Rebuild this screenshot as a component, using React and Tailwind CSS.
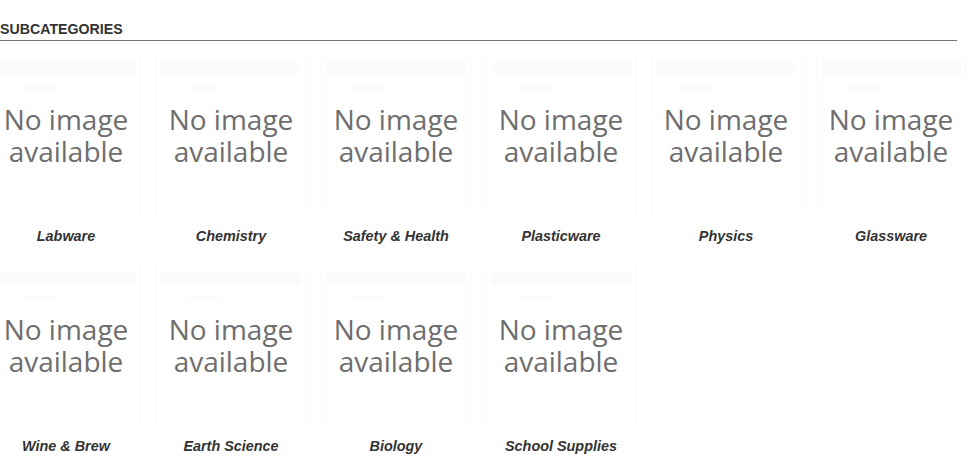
import React from 'react';

const subcategories = [
  'Labware',
  'Chemistry',
  'Safety & Health',
  'Plasticware',
  'Physics',
  'Glassware',
  'Wine & Brew',
  'Earth Science',
  'Biology',
  'School Supplies',
];

// faded "no image" placeholder picture
const Placeholder = () => (
  <div className="w-[150px] h-[160px] shrink-0 flex flex-col border-x border-[#fafafa]">
    <div className="mx-[4px] mt-[6px] h-[14px] bg-[#fbfbfb] rounded-sm" />
    <div className="ml-[30px] w-[34px] mt-[10px] h-[6px] bg-[#fcfcfc]" />
    <div
      className="mt-[12px] text-center text-[28px] leading-[32px] text-[#6e6e6e]"
      style={{ fontFamily: '"Open Sans", sans-serif' }}
    >
      No image
      <br />
      available
    </div>
  </div>
);

const App = () => {
  return (
    <div
      className="w-[957px] bg-white text-[#333]"
      style={{ fontFamily: '"Liberation Sans", Arial, sans-serif' }}
    >
      <div className="pt-[19px] pb-[1px] border-b border-[#777]">
        <h2 className="text-[14.2px] leading-[20px] font-bold">SUBCATEGORIES</h2>
      </div>

      <div className="grid grid-cols-[repeat(6,132px)] gap-x-[33px] gap-y-[19px] pt-[14px]">
        {subcategories.map((name) => (
          <div key={name} className="flex flex-col items-center">
            <Placeholder />
            <div className="mt-[11px] text-[14.4px] leading-[20px] font-bold italic whitespace-nowrap text-[#333]">
              {name}
            </div>
          </div>
        ))}
      </div>
    </div>
  );
};

export default App;
